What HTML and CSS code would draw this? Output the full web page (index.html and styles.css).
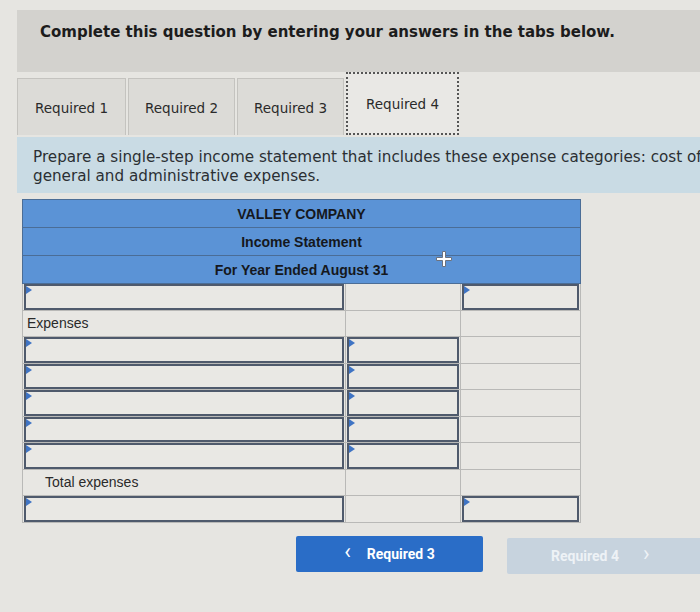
FILE: index.html
```html
<!DOCTYPE html>
<html>
<head>
<meta charset="utf-8">
<link rel="stylesheet" href="styles.css">
</head>
<body>
<div class="page">
  <div class="banner">
    <h2 class="banner-title">Complete this question by entering your answers in the tabs below.</h2>
  </div>
  <div class="tabs">
    <div class="tab">Required 1</div>
    <div class="tab">Required 2</div>
    <div class="tab">Required 3</div>
    <div class="tab tab-active">Required 4</div>
  </div>
  <div class="instr">
    <p class="instr-text">Prepare a single-step income statement that includes these expense categories: cost of goods sold, selling expenses, and<br>general and administrative expenses.</p>
  </div>
  <div class="sheet-wrap">
    <table class="sheet">
      <colgroup><col class="c1"><col class="c2"><col class="c3"></colgroup>
      <thead>
        <tr><th colspan="3">VALLEY COMPANY</th></tr>
        <tr><th colspan="3">Income Statement</th></tr>
        <tr><th colspan="3">For Year Ended August 31</th></tr>
      </thead>
      <tbody>
        <tr><td><div class="inp"></div></td><td></td><td><div class="inp"></div></td></tr>
        <tr><td class="lbl">Expenses</td><td></td><td></td></tr>
        <tr><td><div class="inp"></div></td><td><div class="inp"></div></td><td></td></tr>
        <tr><td><div class="inp"></div></td><td><div class="inp"></div></td><td></td></tr>
        <tr><td><div class="inp"></div></td><td><div class="inp"></div></td><td></td></tr>
        <tr><td><div class="inp"></div></td><td><div class="inp"></div></td><td></td></tr>
        <tr><td><div class="inp"></div></td><td><div class="inp"></div></td><td></td></tr>
        <tr><td class="lbl lbl-indent">Total expenses</td><td></td><td></td></tr>
        <tr><td><div class="inp"></div></td><td></td><td><div class="inp"></div></td></tr>
      </tbody>
    </table>
    <svg class="cursor" width="18" height="18" viewBox="0 0 18 18">
      <path d="M7.5 1.5h3v6h6v3h-6v6h-3v-6h-6v-3h6z" fill="#ffffff" stroke="#6b7280" stroke-width="1"/>
    </svg>
  </div>
  <div class="nav">
    <button class="nav-btn nav-prev"><span class="chev">&lsaquo;</span><span>Required 3</span></button>
    <button class="nav-btn nav-next"><span>Required 4</span><span class="chev">&rsaquo;</span></button>
  </div>
</div>
</body>
</html>
```
FILE: styles.css
```css
html, body {
  margin: 0;
  padding: 0;
  overflow: hidden;
  background: #e6e5e1;
}
.page {
  width: 1000px;
  padding: 10px 0 0 17px;
  font-family: "DejaVu Sans", Verdana, sans-serif;
  color: #222;
}
.banner {
  background: #d3d2ce;
  height: 62px;
  display: flex;
  align-items: center;
  padding-left: 23px;
}
.banner-title {
  margin: 0 0 19px 0;
  font-size: 15px;
  font-weight: bold;
  color: #1c1c1c;
}
.tabs {
  display: flex;
  align-items: flex-end;
}
.tab {
  width: 107px;
  height: 57px;
  box-sizing: border-box;
  background: #dcdbd7;
  border: 1px solid #c4c3bf;
  border-bottom: none;
  margin-right: 2px;
  display: flex;
  align-items: center;
  justify-content: center;
  padding-top: 2px;
  font-size: 13.5px;
  color: #2a2a2a;
}
.tab:first-child { width: 109px; }
.tab-active {
  background: #e9e8e5;
  width: 113px;
  height: 63px;
  border: 2px dotted #555;
  margin-right: 0;
  padding-top: 0;
}
.instr {
  background: #c9dbe4;
  height: 56px;
  margin-top: 2px;
  display: flex;
  align-items: center;
  padding-left: 16px;
}
.instr-text {
  margin: 3px 0 0 0;
  font-size: 15.2px;
  line-height: 19px;
  color: #2b2f33;
  white-space: nowrap;
}
.sheet-wrap {
  position: relative;
  margin: 6px 0 0 5px;
  width: 559px;
}
.sheet {
  border-collapse: collapse;
  width: 559px;
  font-family: "Liberation Sans", Arial, sans-serif;
  font-size: 14px;
}
.c1 { width: 324px; }
.c2 { width: 115px; }
.c3 { width: 120px; }
.sheet th {
  background: #5b93d6;
  height: 28px;
  padding: 0;
  font-weight: bold;
  color: #15181d;
  border: 1px solid #4b6d96;
  text-align: center;
  box-sizing: border-box;
}
.sheet td {
  height: 26.5px;
  padding: 0;
  border: 1px solid #b9b9b7;
  background: #e8e7e3;
  box-sizing: border-box;
  color: #2a2a2a;
}
.lbl { padding-left: 4px !important; }
.lbl-indent { padding-left: 22px !important; }
.inp {
  position: relative;
  height: 21.5px;
  border: 2px solid #4f5a6c;
  margin: 0 1px;
  background: #e9e8e4;
}
.inp::before {
  content: "";
  position: absolute;
  left: 0;
  top: 0;
  border-top: 4px solid transparent;
  border-bottom: 4px solid transparent;
  border-left: 6px solid #3f74c4;
}
.cursor {
  position: absolute;
  left: 413px;
  top: 51px;
}
.nav {
  display: flex;
  margin: 13px 0 0 279px;
  gap: 24px;
}
.nav-btn {
  border: none;
  border-radius: 2px;
  height: 36px;
  display: flex;
  align-items: center;
  justify-content: center;
  gap: 16px;
  font-family: Roboto, "Liberation Sans", sans-serif;
  font-weight: bold;
  font-size: 14px;
  color: #ffffff;
  padding: 0;
}
.chev {
  font-size: 22px;
  font-weight: normal;
  line-height: 1;
  margin-top: -3px;
}
.nav-prev {
  width: 187px;
  background: #2a6dc7;
}
.nav-next {
  width: 220px;
  margin-top: 2px;
  background: #c7d3de;
  color: #eef2f6;
  justify-content: flex-start;
  padding-left: 44px;
  gap: 24px;
}
```
